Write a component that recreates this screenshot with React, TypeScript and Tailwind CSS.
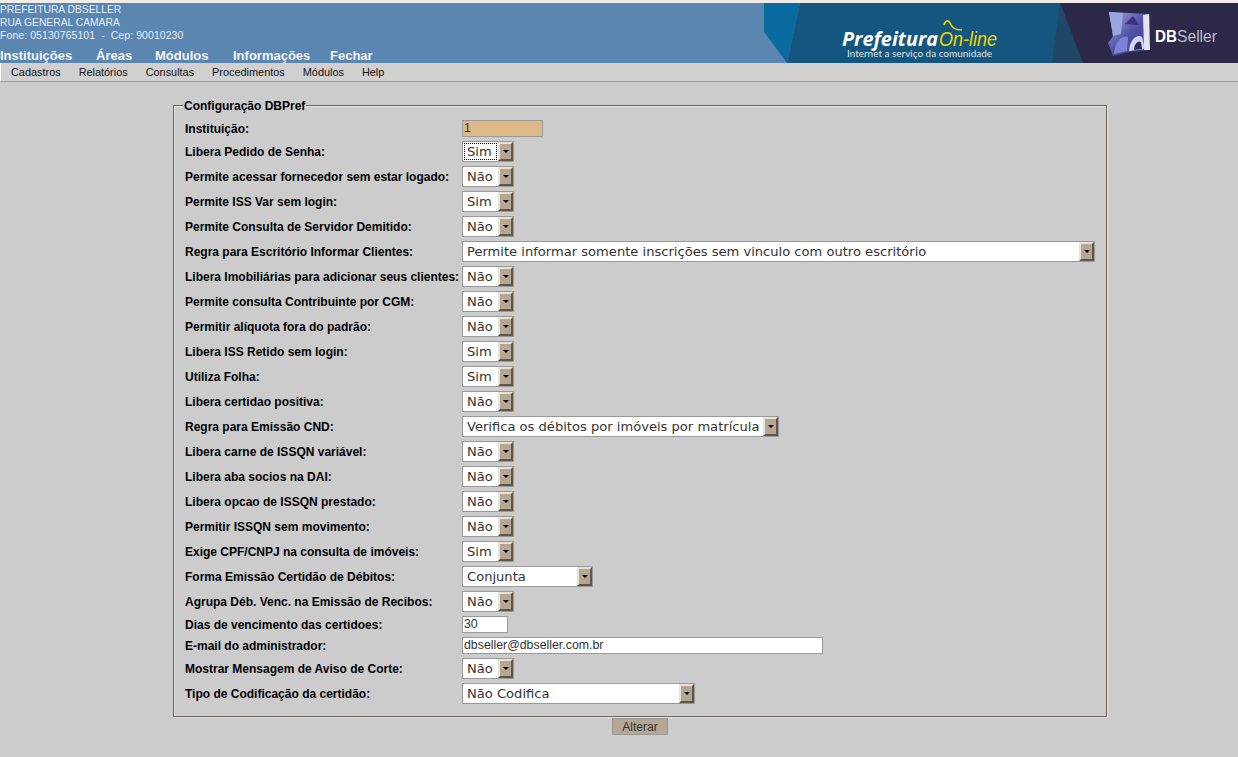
const sans = "font-['Liberation_Sans',Arial,sans-serif]";

const topMenu = [
  { label: 'Instituições', width: 'w-[96px]' },
  { label: 'Áreas', width: 'w-[59px]' },
  { label: 'Módulos', width: 'w-[78px]' },
  { label: 'Informações', width: 'w-[97px]' },
  { label: 'Fechar', width: 'w-[60px]' },
];

const subMenu = ['Cadastros', 'Relatórios', 'Consultas', 'Procedimentos', 'Módulos', 'Help'];

type Row =
  | { label: string; kind: 'select'; value: string; width: string; focused?: boolean }
  | { label: string; kind: 'input'; value: string; width: string; tint?: boolean };

const W = 'w-[52px]';

const rows: Row[] = [
  { label: 'Instituição:', kind: 'input', value: '1', width: 'w-[81px]', tint: true },
  { label: 'Libera Pedido de Senha:', kind: 'select', value: 'Sim', width: W, focused: true },
  { label: 'Permite acessar fornecedor sem estar logado:', kind: 'select', value: 'Não', width: W },
  { label: 'Permite ISS Var sem login:', kind: 'select', value: 'Sim', width: W },
  { label: 'Permite Consulta de Servidor Demitido:', kind: 'select', value: 'Não', width: W },
  {
    label: 'Regra para Escritório Informar Clientes:',
    kind: 'select',
    value: 'Permite informar somente inscrições sem vinculo com outro escritório',
    width: 'w-[633px]',
  },
  { label: 'Libera Imobiliárias para adicionar seus clientes:', kind: 'select', value: 'Não', width: W },
  { label: 'Permite consulta Contribuinte por CGM:', kind: 'select', value: 'Não', width: W },
  { label: 'Permitir alíquota fora do padrão:', kind: 'select', value: 'Não', width: W },
  { label: 'Libera ISS Retido sem login:', kind: 'select', value: 'Sim', width: W },
  { label: 'Utiliza Folha:', kind: 'select', value: 'Sim', width: W },
  { label: 'Libera certidao positiva:', kind: 'select', value: 'Não', width: W },
  { label: 'Regra para Emissão CND:', kind: 'select', value: 'Verifica os débitos por imóveis por matrícula', width: 'w-[317px]' },
  { label: 'Libera carne de ISSQN variável:', kind: 'select', value: 'Não', width: W },
  { label: 'Libera aba socios na DAI:', kind: 'select', value: 'Não', width: W },
  { label: 'Libera opcao de ISSQN prestado:', kind: 'select', value: 'Não', width: W },
  { label: 'Permitir ISSQN sem movimento:', kind: 'select', value: 'Não', width: W },
  { label: 'Exige CPF/CNPJ na consulta de imóveis:', kind: 'select', value: 'Sim', width: W },
  { label: 'Forma Emissão Certidão de Débitos:', kind: 'select', value: 'Conjunta', width: 'w-[131px]' },
  { label: 'Agrupa Déb. Venc. na Emissão de Recibos:', kind: 'select', value: 'Não', width: W },
  { label: 'Dias de vencimento das certidoes:', kind: 'input', value: '30', width: 'w-[46px]' },
  { label: 'E-mail do administrador:', kind: 'input', value: 'dbseller@dbseller.com.br', width: 'w-[361px]' },
  { label: 'Mostrar Mensagem de Aviso de Corte:', kind: 'select', value: 'Não', width: W },
  { label: 'Tipo de Codificação da certidão:', kind: 'select', value: 'Não Codifica', width: 'w-[233px]' },
];

function FakeSelect({ value, width, focused }: { value: string; width: string; focused?: boolean }) {
  return (
    <div role="combobox" className={`${width} h-[21px] flex border border-[#999999] bg-white`}>
      <div className="flex-1 min-w-0 p-px">
        <div
          className={`h-full pl-[2px] flex items-center whitespace-nowrap overflow-hidden text-[13.08px] text-[#333333] font-['DejaVu_Sans',sans-serif] border border-dotted ${
            focused ? 'border-black' : 'border-transparent'
          }`}
        >
          {value}
        </div>
      </div>
      <div className="w-[15px] flex items-center justify-center bg-[#b5a794] border-2 border-t-[#e8e2d8] border-l-[#e8e2d8] border-r-[#5e574d] border-b-[#5e574d]">
        <div className="w-0 h-0 border-x-[3px] border-x-transparent border-t-[3px] border-t-black" />
      </div>
    </div>
  );
}

function TextBox({ value, width, tint }: { value: string; width: string; tint?: boolean }) {
  return (
    <div
      className={`${width} h-[17px] flex items-center pl-px border border-[#999999] text-[12.35px] text-[#333333] ${sans} ${
        tint ? 'bg-[#deb887]' : 'bg-white'
      }`}
    >
      {value}
    </div>
  );
}

function Banner() {
  return (
    <svg width="474" height="60" viewBox="0 0 474 60" className="block shrink-0">
      <defs>
        <linearGradient id="dbBlock" x1="0" y1="0" x2="1" y2="1">
          <stop offset="0" stopColor="#a9aade" />
          <stop offset="0.5" stopColor="#4f52a6" />
          <stop offset="1" stopColor="#3c3f86" />
        </linearGradient>
        <filter id="soft">
          <feGaussianBlur stdDeviation="0.6" />
        </filter>
      </defs>
      <polygon points="0,0 36,0 23,60 23,60 0,29" fill="#0a6c9e" />
      <polygon points="36,0 296,0 320,60 23,60" fill="#14567f" />
      <polygon points="296,0 319,60 288,60" fill="#1f4866" />
      <polygon points="296,0 474,0 474,60 319,60" fill="#2b2848" />
      <text x="78" y="43" fill="#ffffff" fontSize="20" fontWeight="700" fontStyle="italic" fontFamily="'Open Sans',sans-serif" textLength="96" lengthAdjust="spacingAndGlyphs">
        Prefeitura
      </text>
      <text x="175" y="43" fill="#efd900" fontSize="19.5" fontStyle="italic" fontFamily="'Liberation Sans',sans-serif" textLength="58" lengthAdjust="spacingAndGlyphs">
        On-line
      </text>
      <path d="M180 22 C181 18 184 16 186 20 C188 25 191 27 198 27" fill="none" stroke="#efd900" strokeWidth="1.7" />
      <text x="83" y="54" fill="#dfe6ea" fontSize="10" fontFamily="Lato,sans-serif" textLength="145" lengthAdjust="spacingAndGlyphs">
        Internet a serviço da comunidade
      </text>
      {/* logo DBSeller */}
      <g filter="url(#soft)">
        <path d="M345 9 L386 11 L385 47 L365 49 L349 53 L344 40 L349 33 Z" fill="url(#dbBlock)" />
        <path d="M345 9 L359 10 L357 31 L349 33 Z" fill="#9aa6e4" />
        <path d="M385 11 L386 47 L380 47 L379 12 Z" fill="#e4e2f4" />
        <path d="M361 21 L369 13 L375 22 Z" fill="#38307f" />
        <path d="M365 48 C365 38 373 30 378 34 L381 46 Z" fill="#d2d4f2" />
        <path d="M370 47 C370 41 374 37 377 39 L378 46 Z" fill="#2f2c5c" />
        <path d="M350 51 C351 38 358 32 364 34 L363 48 Z" fill="#7e82d6" />
      </g>
      <text x="391" y="39" fill="#ffffff" fontSize="16" fontWeight="700" fontFamily="'Liberation Sans',sans-serif" textLength="22" lengthAdjust="spacingAndGlyphs">
        DB
      </text>
      <text x="413" y="39" fill="#bdbdca" fontSize="16" fontFamily="'Liberation Sans',sans-serif" textLength="40" lengthAdjust="spacingAndGlyphs">
        Seller
      </text>
    </svg>
  );
}

export default function App() {
  return (
    <div className={`min-h-[757px] bg-[#cccccc] ${sans}`}>
      <div className="h-[3px] bg-[#f1ede6]" />
      <header className="h-[60px] flex justify-between bg-[#5b86b2] text-white">
        <div className="flex flex-col">
          <div className="h-[46px] text-[10.3px] leading-[13px] text-[#e6eef6]">
            <div>PREFEITURA DBSELLER</div>
            <div>RUA GENERAL CAMARA</div>
            <div className="whitespace-pre text-[10.5px] tracking-[0.07px]">Fone: 05130765101  -  Cep: 90010230</div>
          </div>
          <nav className="flex text-[13px] font-bold leading-[14px] text-[#f2f5f9]">
            {topMenu.map((m) => (
              <span key={m.label} className={m.width}>
                {m.label}
              </span>
            ))}
          </nav>
        </div>
        <Banner />
      </header>
      <nav className="h-[19px] flex items-center gap-[18px] pl-[10px] bg-[#d0d0d0] border-b border-[#999999] border-l border-l-white text-[10.9px] text-[#111111]">
        {subMenu.map((m) => (
          <span key={m}>{m}</span>
        ))}
      </nav>

      <fieldset className="ml-[173px] mt-[16px] w-[934px] h-[619px] border border-[#6d6459] pl-[11px] pt-[6px] shadow-[inset_1px_1px_0_#e4e4e4,1px_1px_0_#e4e4e4]">
        <legend className="-ml-[2px] px-px bg-[#cccccc] text-[12px] leading-[14px] font-bold text-black">
          <span className="block translate-y-px">Configuração DBPref</span>
        </legend>
        {rows.map((r) => (
          <div key={r.label} className={`flex items-center ${r.kind === 'select' ? 'h-[25px]' : 'h-[21px]'}`}>
            <label className="w-[277px] shrink-0 text-[12px] font-bold text-black whitespace-nowrap">{r.label}</label>
            {r.kind === 'select' ? (
              <FakeSelect value={r.value} width={r.width} focused={r.focused} />
            ) : (
              <TextBox value={r.value} width={r.width} tint={r.tint} />
            )}
          </div>
        ))}
      </fieldset>

      <div className="flex justify-center pl-[42px] mt-px">
        <button type="button" className="w-[56px] h-[17px] flex items-center justify-center bg-[#b5a794] border border-[#999999] text-[12px] text-[#333333]">
          Alterar
        </button>
      </div>
    </div>
  );
}
